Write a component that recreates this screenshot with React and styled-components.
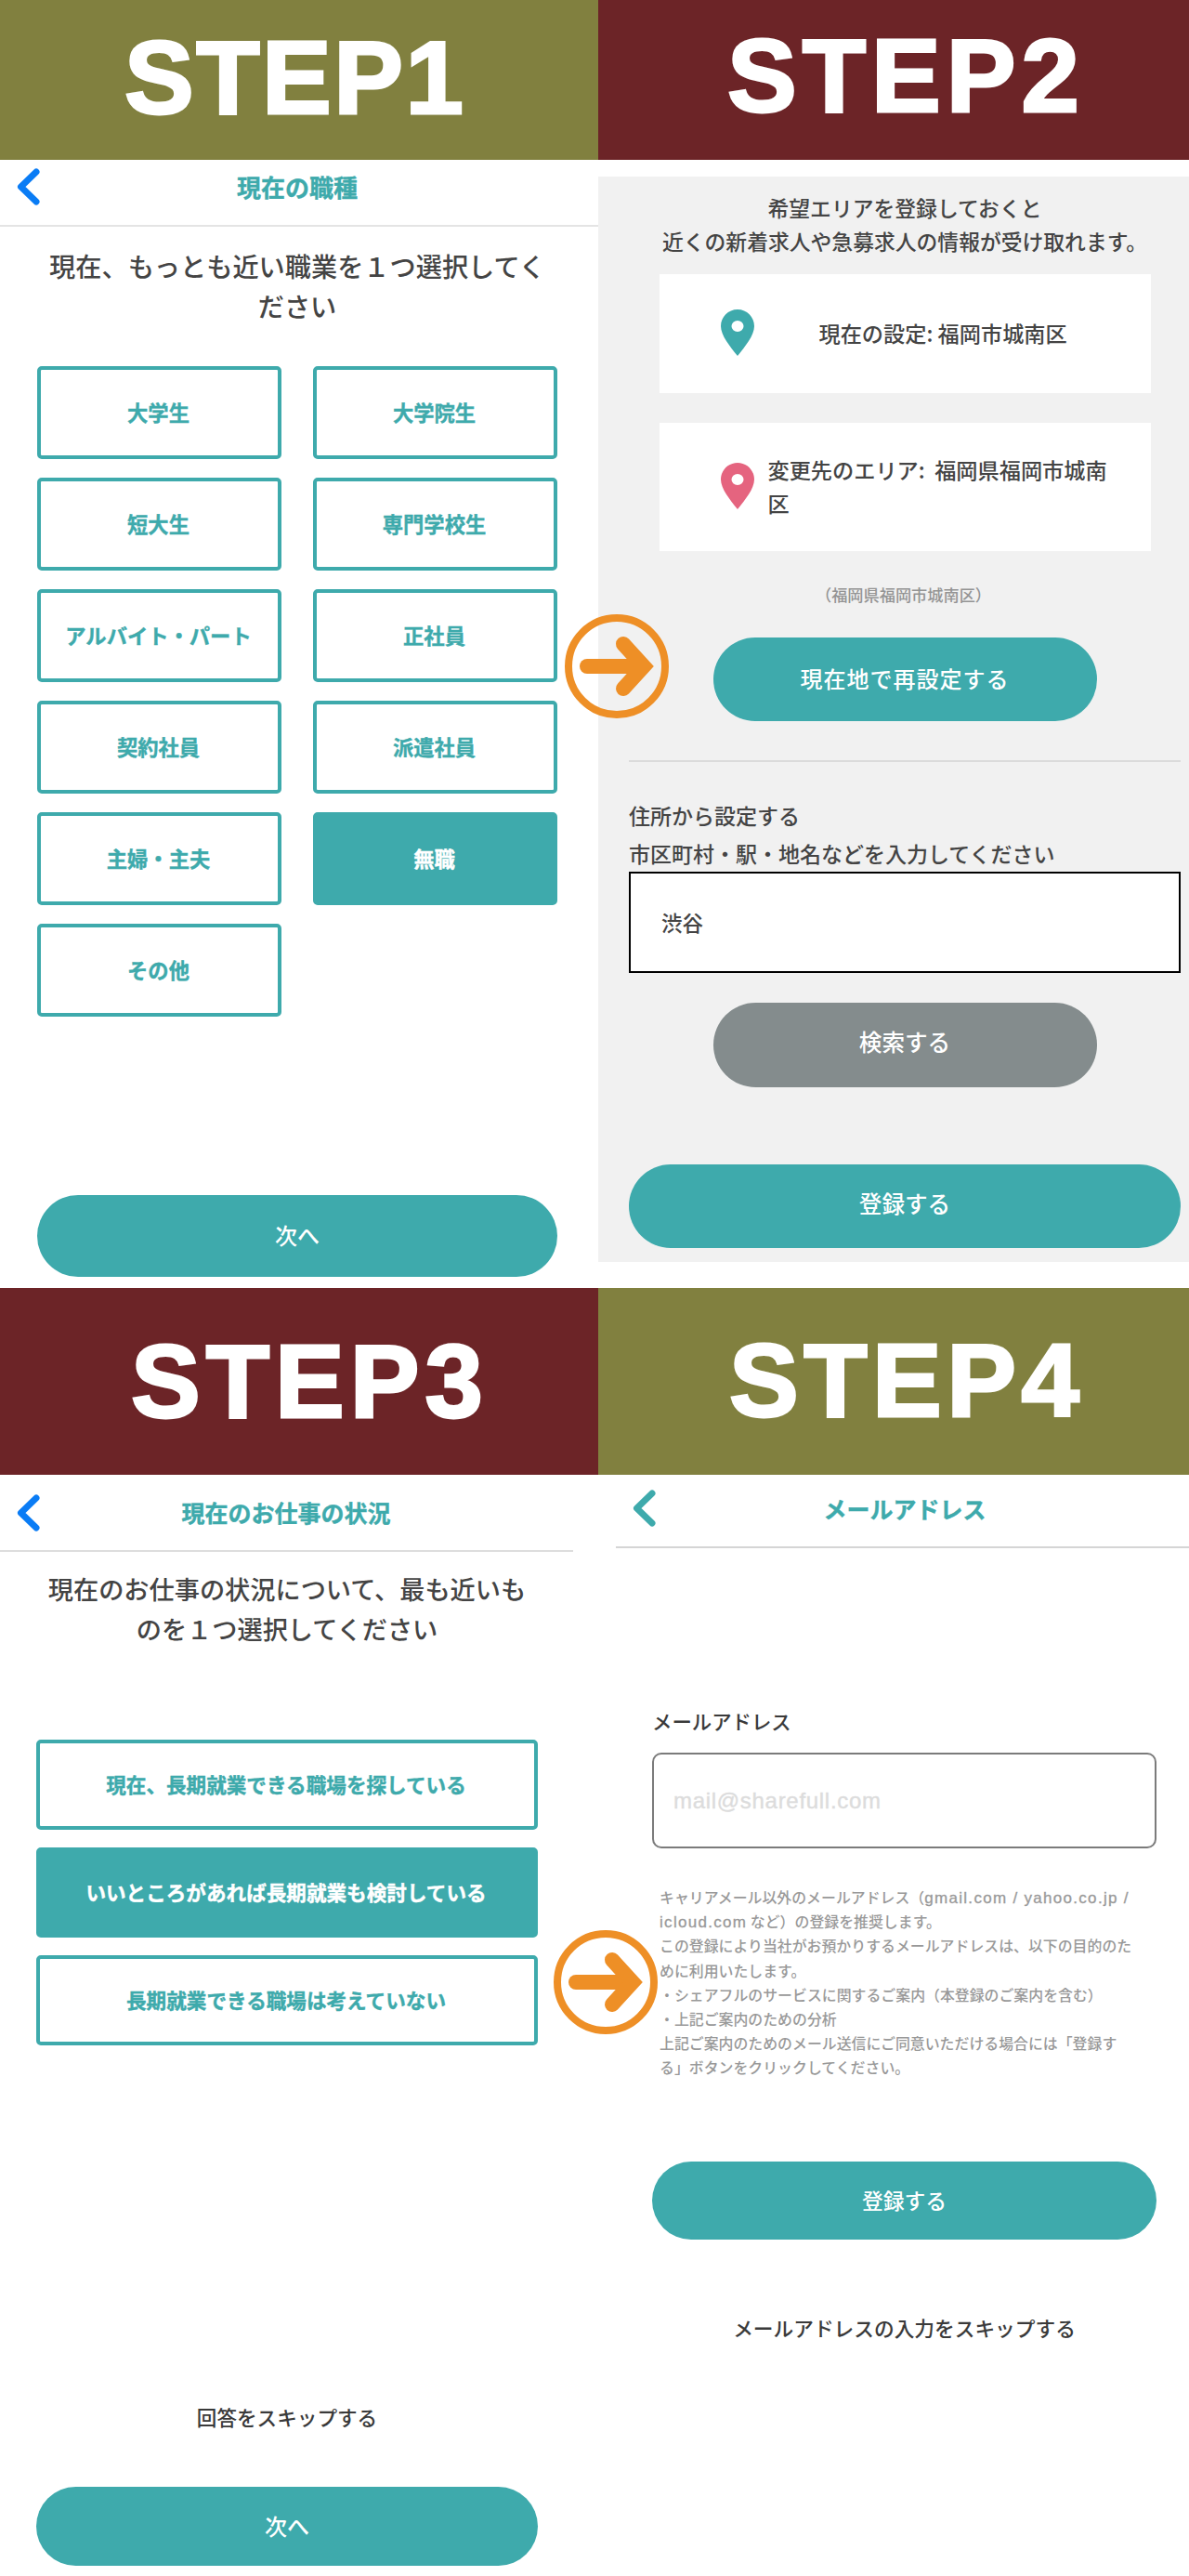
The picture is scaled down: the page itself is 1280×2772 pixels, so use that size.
import React from "react";
import styled, { createGlobalStyle } from "styled-components";

const TEAL = "#3eaaac";
const INK = "#444444";

const GlobalStyle = createGlobalStyle`
  html, body { margin: 0; padding: 0; background: #fff; }
  * { box-sizing: border-box; }
  body { font-family: "Noto Sans CJK JP", "Noto Sans", sans-serif; color: ${INK}; }
`;

const Page = styled.div`
  position: relative;
  display: grid;
  grid-template-columns: 644px 636px;
  grid-template-rows: 1386px 1386px;
  width: 1280px;
  height: 2772px;
  overflow: hidden;
`;

const Section = styled.section`
  display: flex;
  flex-direction: column;
  min-width: 0;
`;

const Banner = styled.div`
  flex: none;
  display: flex;
  align-items: center;
  height: ${(p) => p.$h}px;
  padding-left: ${(p) => p.$left}px;
  padding-bottom: ${(p) => p.$lift}px;
  background: ${(p) => p.$bg};
  color: #fff;
  font-family: "Liberation Sans", Arial, sans-serif;
  font-weight: 700;
  font-size: 112px;
  letter-spacing: ${(p) => p.$ls}px;
  -webkit-text-stroke: 3px #fff;
  line-height: 1;
`;

const Nav = styled.div`
  flex: none;
  display: grid;
  grid-template-columns: 1fr auto 1fr;
  align-items: center;
  height: ${(p) => p.$h}px;
  margin-left: ${(p) => p.$ml || 0}px;
  width: ${(p) => p.$w}px;
  padding: 0 ${(p) => p.$pr}px ${(p) => p.$pb || 0}px 18px;
  border-bottom: 2px solid ${(p) => p.$line};
`;

const NavTitle = styled.div`
  margin-top: ${(p) => p.$nudge}px;
  color: ${TEAL};
  font-weight: 700;
  font-size: ${(p) => p.$size}px;
  line-height: 1.2;
  white-space: nowrap;
  -webkit-text-stroke: 0.4px ${TEAL};
`;

const Heading = styled.h2`
  margin: ${(p) => p.$mt}px 0 0;
  padding: 0;
  font-size: ${(p) => p.$size}px;
  font-weight: 500;
  line-height: 43px;
  text-align: center;
  color: ${INK};
  white-space: nowrap;
`;

const Body = styled.div`
  flex: 1;
  display: flex;
  flex-direction: column;
  padding: 0 ${(p) => p.$r}px 0 ${(p) => p.$l}px;
`;

const JobGrid = styled.div`
  display: grid;
  grid-template-columns: 263px 263px;
  grid-auto-rows: 100px;
  column-gap: 34px;
  row-gap: 20px;
  margin-top: 44px;
`;

const OptionList = styled.div`
  display: flex;
  flex-direction: column;
  gap: 19px;
  margin-top: 98px;
`;

const Choice = styled.div`
  display: flex;
  align-items: center;
  justify-content: center;
  height: ${(p) => p.$h}px;
  padding: 0 2px 3px 0;
  border: 4px solid ${TEAL};
  border-radius: 5px;
  background: ${(p) => (p.$active ? TEAL : "#fff")};
  color: ${(p) => (p.$active ? "#fff" : TEAL)};
  font-weight: 700;
  font-size: ${(p) => p.$size}px;
  white-space: nowrap;
  -webkit-text-stroke: 0.4px currentColor;
`;

const Pill = styled.div`
  flex: none;
  display: flex;
  align-items: center;
  justify-content: center;
  align-self: ${(p) => (p.$narrow ? "center" : "stretch")};
  width: ${(p) => (p.$narrow ? "413px" : "auto")};
  height: ${(p) => p.$h}px;
  margin-top: ${(p) => p.$mt};
  margin-bottom: ${(p) => p.$mb || 0}px;
  padding-bottom: ${(p) => p.$pb ?? 2}px;
  border-radius: 999px;
  background: ${(p) => p.$bg || TEAL};
  color: #fff;
  font-weight: 500;
  font-size: ${(p) => p.$size}px;
  letter-spacing: ${(p) => p.$ls || 0}px;
`;

const SkipLink = styled.div`
  margin-top: ${(p) => p.$mt}px;
  font-size: ${(p) => p.$size}px;
  font-weight: 500;
  line-height: 30px;
  text-align: center;
  color: #3a3a3a;
  white-space: nowrap;
`;

const GreyPanel = styled.div`
  flex: none;
  display: flex;
  flex-direction: column;
  height: 1168px;
  margin-top: 18px;
  padding: 16px 9px 0 33px;
  background: #f1f1f1;
`;

const Intro = styled.p`
  margin: 0;
  font-size: 22.8px;
  font-weight: 500;
  line-height: 36px;
  text-align: center;
  white-space: nowrap;
`;

const AreaCard = styled.div`
  flex: none;
  align-self: center;
  display: flex;
  align-items: center;
  gap: ${(p) => p.$gap}px;
  width: 529px;
  height: ${(p) => p.$h}px;
  margin-top: ${(p) => p.$mt}px;
  padding: 0 0 3px 66px;
  background: #fff;
  font-size: 23.2px;
  font-weight: 500;
  line-height: 36px;
  white-space: pre;
`;

const Muted = styled.p`
  margin: 35px 0 0;
  padding-right: 3px;
  font-size: 17.2px;
  font-weight: 500;
  line-height: 24px;
  text-align: center;
  color: #949494;
`;

const Rule = styled.hr`
  flex: none;
  width: 100%;
  height: 2px;
  margin: 42px 0 0;
  border: 0;
  background: #dbdbdb;
`;

const AddressLabel = styled.p`
  margin: 37px 0 -1px;
  font-size: 23px;
  font-weight: 500;
  line-height: 41px;
  white-space: nowrap;
`;

const SearchField = styled.div`
  flex: none;
  display: flex;
  align-items: center;
  height: 109px;
  padding: 0 0 2px 33px;
  border: 2px solid #000;
  background: #fff;
  font-size: 22.5px;
  font-weight: 500;
`;

const FieldLabel = styled.div`
  margin-top: 171px;
  font-size: 21.4px;
  font-weight: 500;
  line-height: 30px;
  color: #3a3a3a;
`;

const MailField = styled.div`
  flex: none;
  display: flex;
  align-items: center;
  height: 103px;
  margin-top: 19px;
  padding-left: 21px;
  border: 2px solid #7b7b7b;
  border-radius: 10px;
  color: #dcdcdc;
  font-family: "Liberation Sans", Arial, sans-serif;
  font-size: 24px;
  letter-spacing: 0.7px;
  -webkit-text-stroke: 0.4px #dcdcdc;
`;

const Notes = styled.p`
  margin: 40px 0 0 8px;
  font-size: 15.9px;
  font-weight: 500;
  line-height: 26.2px;
  color: #999;
  white-space: nowrap;
`;

const Latin = styled.span`
  font-family: "Liberation Sans", Arial, sans-serif;
  font-size: 17px;
  line-height: 1;
  letter-spacing: 1.3px;
  -webkit-text-stroke: 0.3px #999;
`;

const ArrowBadge = styled.svg`
  position: absolute;
  left: ${(p) => p.$x}px;
  top: ${(p) => p.$y}px;
  width: 112px;
  height: 112px;
`;

const BackIcon = ({ color }) => (
  <svg width="25" height="40" viewBox="0 0 25 40" fill="none">
    <polyline
      points="21,4 4.5,20 21,36"
      stroke={color}
      strokeWidth="7"
      strokeLinecap="round"
      strokeLinejoin="round"
    />
  </svg>
);

const PinIcon = ({ color }) => (
  <svg width="36" height="50" viewBox="0 0 36 50" style={{ flex: "none" }}>
    <path d="M18 0C8 0 0 8 0 18c0 10 10 22 18 32 8-10 18-22 18-32C36 8 28 0 18 0z" fill={color} />
    <ellipse cx="18" cy="18" rx="6.5" ry="6" fill="#fff" />
  </svg>
);

const NextArrow = ({ x, y }) => (
  <ArrowBadge $x={x} $y={y} viewBox="0 0 112 112" fill="none">
    <circle cx="56" cy="56" r="52" stroke="#ee8f26" strokeWidth="8" />
    <line x1="24" y1="56" x2="82" y2="56" stroke="#ee8f26" strokeWidth="16" strokeLinecap="round" />
    <polyline
      points="63,32 85,56 63,80"
      stroke="#ee8f26"
      strokeWidth="16"
      strokeLinecap="round"
      strokeLinejoin="miter"
    />
  </ArrowBadge>
);

const jobs = [
  "大学生",
  "大学院生",
  "短大生",
  "専門学校生",
  "アルバイト・パート",
  "正社員",
  "契約社員",
  "派遣社員",
  "主婦・主夫",
  "無職",
  "その他",
];

const statuses = [
  "現在、長期就業できる職場を探している",
  "いいところがあれば長期就業も検討している",
  "長期就業できる職場は考えていない",
];

const App = () => {
  return (
    <Page>
      <GlobalStyle />

      <Section>
        <Banner $h={172} $bg="#81803f" $left={134} $ls={2.5} $lift={4}>STEP1</Banner>
        <Nav $h={72} $w={644} $pr={22} $pb={13} $line="#e4e4e4">
          <BackIcon color="#0a7cf5" />
          <NavTitle $size={26} $nudge={0}>現在の職種</NavTitle>
        </Nav>
        <Body $l={40} $r={44}>
          <Heading $mt={20} $size={28.2}>
            現在、もっとも近い職業を１つ選択してく
            <br />
            ださい
          </Heading>
          <JobGrid>
            {jobs.map((job) => (
              <Choice key={job} $h={100} $size={22.3} $active={job === "無職"}>
                {job}
              </Choice>
            ))}
          </JobGrid>
          <Pill $h={88} $size={24} $mt="auto" $mb={12} $pb={3}>次へ</Pill>
        </Body>
      </Section>

      <Section>
        <Banner $h={172} $bg="#6c2427" $left={139} $ls={6} $lift={9}>STEP2</Banner>
        <GreyPanel>
          <Intro>
            希望エリアを登録しておくと
            <br />
            近くの新着求人や急募求人の情報が受け取れます。
          </Intro>
          <AreaCard $h={128} $mt={17} $gap={70}>
            <PinIcon color={TEAL} />
            <span>現在の設定: 福岡市城南区</span>
          </AreaCard>
          <AreaCard $h={138} $mt={32} $gap={15}>
            <PinIcon color="#e5647f" />
            <span>
              変更先のエリア:  福岡県福岡市城南
              <br />
              区
            </span>
          </AreaCard>
          <Muted>（福岡県福岡市城南区）</Muted>
          <Pill $narrow $h={90} $size={24} $ls={1} $mt="34px" $pb={3}>現在地で再設定する</Pill>
          <Rule />
          <AddressLabel>
            住所から設定する
            <br />
            市区町村・駅・地名などを入力してください
          </AddressLabel>
          <SearchField>渋谷</SearchField>
          <Pill $narrow $h={91} $size={24.6} $bg="#848c8d" $mt="32px" $pb={10}>検索する</Pill>
          <Pill $h={90} $size={24.6} $mt="83px" $pb={9}>登録する</Pill>
        </GreyPanel>
      </Section>

      <Section>
        <Banner $h={201} $bg="#6c2427" $left={141} $ls={6} $lift={0}>STEP3</Banner>
        <Nav $h={83} $w={617} $pr={19} $line="#dddddd">
          <BackIcon color="#0a7cf5" />
          <NavTitle $size={25} $nudge={-2}>現在のお仕事の状況</NavTitle>
        </Nav>
        <Body $l={39} $r={65}>
          <Heading $mt={18} $size={27.2}>
            現在のお仕事の状況について、最も近いも
            <br />
            のを１つ選択してください
          </Heading>
          <OptionList>
            {statuses.map((status, i) => (
              <Choice key={status} $h={97} $size={21.6} $active={i === 1}>
                {status}
              </Choice>
            ))}
          </OptionList>
          <SkipLink $mt={385} $size={21.6}>回答をスキップする</SkipLink>
          <Pill $h={85} $size={24} $mt="60px">次へ</Pill>
        </Body>
      </Section>

      <Section>
        <Banner $h={201} $bg="#81803f" $left={141} $ls={5.5} $lift={1}>STEP4</Banner>
        <Nav $h={79} $w={617} $ml={19} $pr={13} $pb={6} $line="#d5d5d5">
          <BackIcon color={TEAL} />
          <NavTitle $size={25} $nudge={0}>メールアドレス</NavTitle>
        </Nav>
        <Body $l={58} $r={35}>
          <FieldLabel>メールアドレス</FieldLabel>
          <MailField>mail@sharefull.com</MailField>
          <Notes>
            キャリアメール以外のメールアドレス（<Latin>gmail.com / yahoo.co.jp /</Latin>
            <br />
            <Latin>icloud.com</Latin> など）の登録を推奨します。
            <br />
            この登録により当社がお預かりするメールアドレスは、以下の目的のた
            <br />
            めに利用いたします。
            <br />
            ・シェアフルのサービスに関するご案内（本登録のご案内を含む）
            <br />
            ・上記ご案内のための分析
            <br />
            上記ご案内のためのメール送信にご同意いただける場合には「登録す
            <br />
            る」ボタンをクリックしてください。
          </Notes>
          <Pill $h={84} $size={22.8} $mt="87px" $pb={0}>登録する</Pill>
          <SkipLink $mt={80} $size={21.7}>メールアドレスの入力をスキップする</SkipLink>
        </Body>
      </Section>

      <NextArrow x={608} y={661} />
      <NextArrow x={596} y={2077} />
    </Page>
  );
};

export default App;
